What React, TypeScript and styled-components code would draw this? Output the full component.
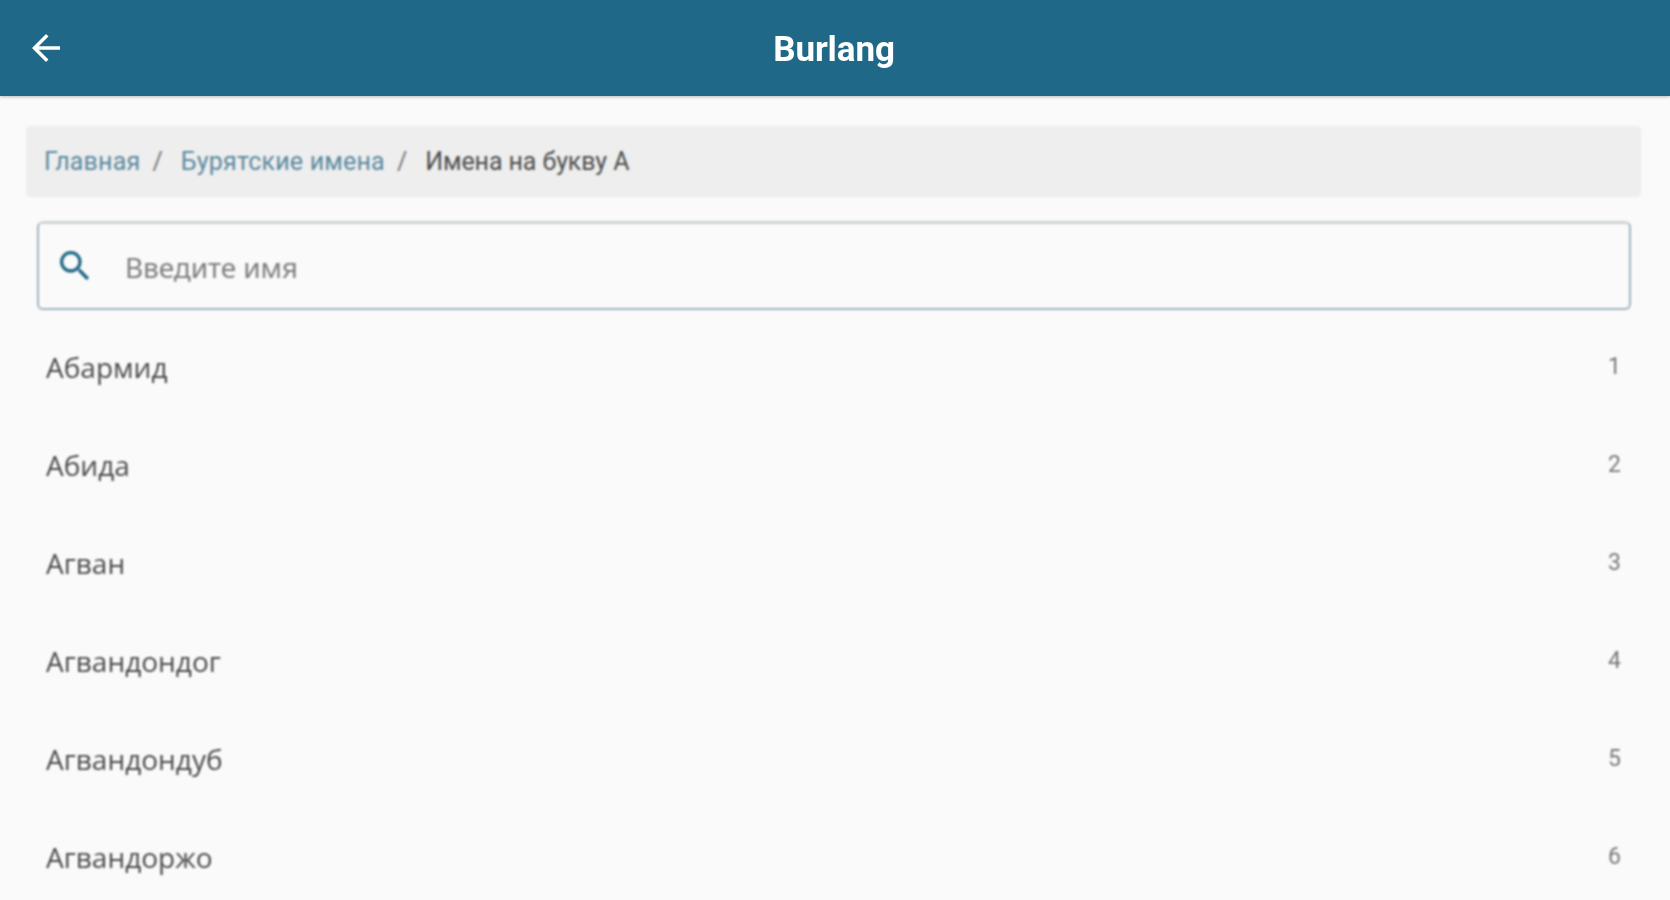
import React from "react";
import styled, { createGlobalStyle } from "styled-components";

const Global = createGlobalStyle`
  html, body { margin: 0; padding: 0; height: 900px; overflow: hidden; background: #fafafa; }
  #root { height: 900px; overflow: hidden; }
`;

const Page = styled.div`
  height: 900px;
  overflow: hidden;
  display: flex;
  flex-direction: column;
  background: #fafafa;
  font-family: Roboto, "Liberation Sans", sans-serif;
`;

const Header = styled.header`
  height: 96px;
  flex: none;
  background: #1f6887;
  box-shadow: 0 1px 3px rgba(0, 0, 0, 0.25);
  display: grid;
  grid-template-columns: 96px 1fr 96px;
  align-items: center;
`;

const BackButton = styled.button`
  border: 0;
  background: none;
  padding: 0 0 0 25px;
  height: 96px;
  display: flex;
  align-items: center;
  filter: blur(0.7px);
`;

const Title = styled.h1`
  margin: 0;
  padding-top: 2px;
  text-align: center;
  color: #fff;
  font-size: 35px;
  font-weight: 700;
  letter-spacing: -0.1px;
  transform: translateX(-1px);
  filter: blur(0.7px);
`;

const Content = styled.main`
  padding: 30px 29px 0 26px;
  display: flex;
  flex-direction: column;
  filter: blur(0.8px);
`;

const Breadcrumbs = styled.nav`
  height: 71px;
  background: #eeeeee;
  border-radius: 4px;
  padding: 0 18px;
  display: flex;
  align-items: center;
  font-size: 25px;
`;

const Crumb = styled.a`
  color: #5b89a0;
  letter-spacing: 0.2px;
`;

const Current = styled.span`
  color: #4d4d4d;
  letter-spacing: -0.1px;
`;

const Slash = styled.span`
  color: #777;
  margin: 0 18px 0 12px;
`;

const Search = styled.div`
  margin: 24px 10px 0 11px;
  height: 89px;
  box-sizing: border-box;
  border: 2px solid #9fb4c2;
  border-top: 3px solid #cfd4d7;
  border-radius: 6px;
  display: flex;
  align-items: center;
  padding: 0 0 0 16px;
  gap: 30px;
`;

const SearchText = styled.span`
  color: #7d7d7d;
  font-size: 28px;
  font-family: "Noto Sans", sans-serif;
  padding-top: 2px;
  letter-spacing: -0.1px;
`;

const List = styled.ul`
  list-style: none;
  margin: 9px 10px 0 20px;
  padding: 0;
`;

const Row = styled.li`
  height: 98px;
  display: flex;
  align-items: center;
  justify-content: space-between;
`;

const Name = styled.span`
  color: #4a4a4a;
  font-family: "Open Sans", sans-serif;
  font-size: 28px;
  padding-bottom: 2px;
`;

const Num = styled.span`
  color: #777;
  font-size: 23px;
  padding: 0 10px 4px 0;
`;

const names = ["Абармид", "Абида", "Агван", "Агвандондог", "Агвандондуб", "Агвандоржо"];

export default function App() {
  return (
    <Page>
      <Global />
      <Header>
        <BackButton aria-label="Назад">
          <svg width="42" height="42" viewBox="0 0 24 24" fill="#fff">
            <path d="M20 11H7.83l5.59-5.59L12 4l-8 8 8 8 1.41-1.41L7.83 13H20v-2z" />
          </svg>
        </BackButton>
        <Title>Burlang</Title>
      </Header>
      <Content>
        <Breadcrumbs>
          <Crumb>Главная</Crumb>
          <Slash>/</Slash>
          <Crumb>Бурятские имена</Crumb>
          <Slash>/</Slash>
          <Current>Имена на букву А</Current>
        </Breadcrumbs>
        <Search>
          <svg width="40" height="40" viewBox="0 0 24 24" fill="#1f6887">
            <path d="M15.5 14h-.79l-.28-.27A6.47 6.47 0 0 0 16 9.5 6.5 6.5 0 1 0 9.5 16c1.61 0 3.09-.59 4.23-1.57l.27.28v.79l5 4.99L20.49 19l-4.99-5zm-6 0C7.01 14 5 11.99 5 9.5S7.01 5 9.5 5 14 7.01 14 9.5 11.99 14 9.5 14z" />
          </svg>
          <SearchText>Введите имя</SearchText>
        </Search>
        <List>
          {names.map((n, i) => (
            <Row key={n}>
              <Name>{n}</Name>
              <Num>{i + 1}</Num>
            </Row>
          ))}
        </List>
      </Content>
    </Page>
  );
}
